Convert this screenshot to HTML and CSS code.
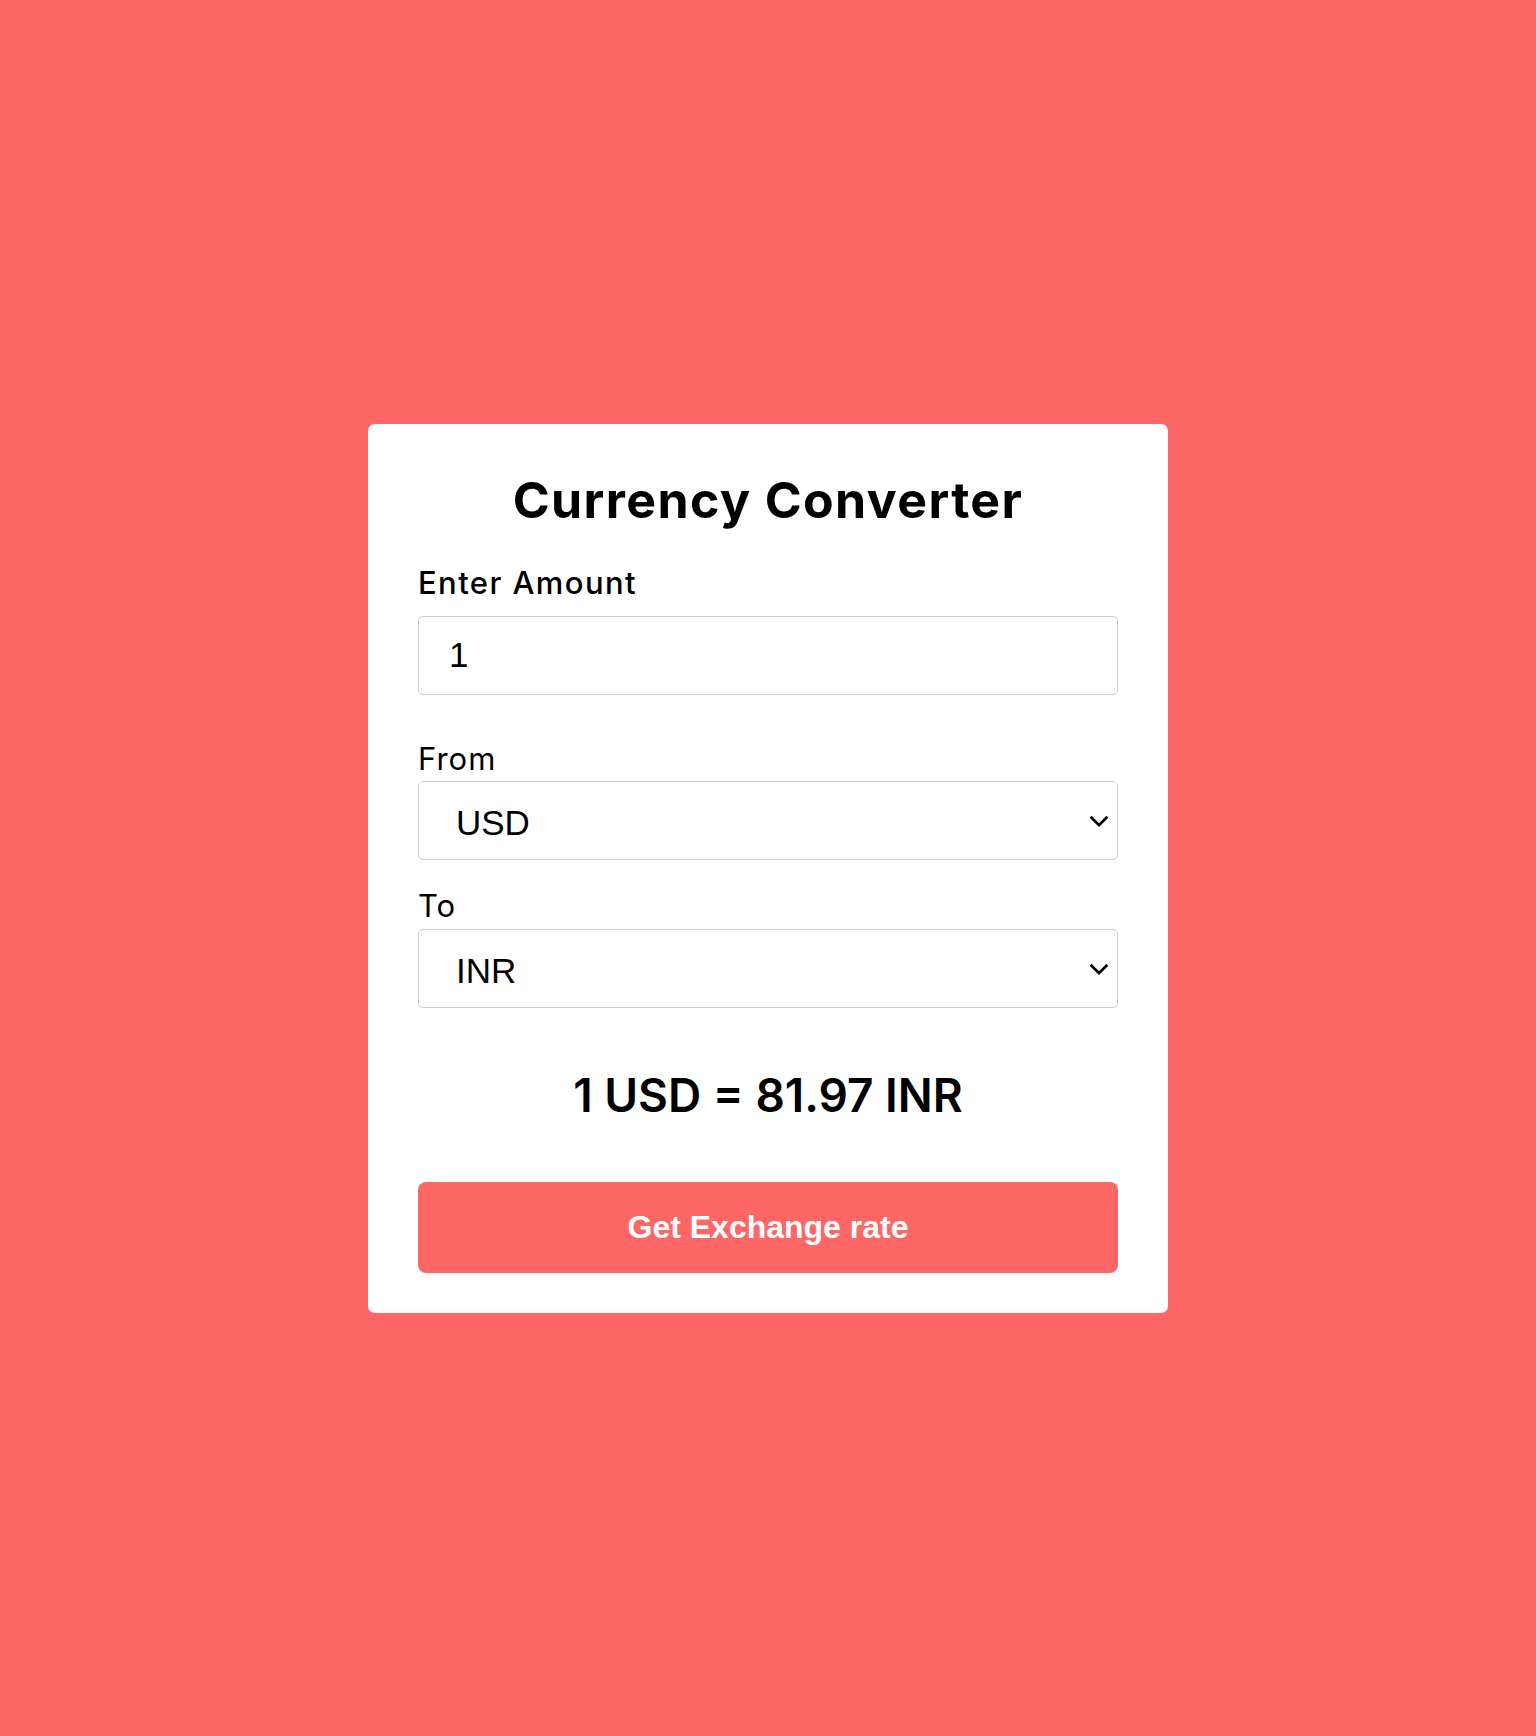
FILE: index.html
```html
<!DOCTYPE html>
<html lang="en">
<head>
<meta charset="utf-8">
<title>Currency Converter</title>
<link rel="stylesheet" href="styles.css">
</head>
<body>
<main class="page">
  <div class="card">
    <h1 class="title">Currency Converter</h1>
    <form class="form" onsubmit="return false;">
      <label class="label label-amount" for="amount">Enter Amount</label>
      <input class="field" id="amount" type="text" value="1">
      <label class="label label-from" for="from">From</label>
      <div class="select-wrap sw-from">
        <select class="field select" id="from">
          <option>USD</option>
          <option>INR</option>
          <option>EUR</option>
        </select>
        <svg class="chevron" width="20" height="13" viewBox="0 0 20 13" aria-hidden="true"><path d="M1.6 1.8 L10 10.2 L18.4 1.8" fill="none" stroke="#000" stroke-width="2.7"/></svg>
      </div>
      <label class="label label-to" for="to">To</label>
      <div class="select-wrap sw-to">
        <select class="field select" id="to">
          <option>INR</option>
          <option>USD</option>
          <option>EUR</option>
        </select>
        <svg class="chevron" width="20" height="13" viewBox="0 0 20 13" aria-hidden="true"><path d="M1.6 1.8 L10 10.2 L18.4 1.8" fill="none" stroke="#000" stroke-width="2.7"/></svg>
      </div>
      <div class="result">1 USD = 81.97 INR</div>
      <button class="btn" type="button">Get Exchange rate</button>
    </form>
  </div>
</main>
</body>
</html>
```
FILE: styles.css
```css
* { box-sizing: border-box; }
html, body { margin: 0; padding: 0; }
body {
  background: #ff6666;
  font-family: Inter, "Noto Sans", sans-serif;
  color: #000;
}
.page {
  min-height: 1736px;
  display: flex;
  align-items: center;
  justify-content: center;
}
.card {
  width: 800px;
  background: #fff;
  border-radius: 7px;
  padding: 51px 50px 40px;
}
.title {
  margin: 0;
  font-size: 50px;
  line-height: 50px;
  font-weight: 700;
  text-align: center;
  letter-spacing: 1.4px;
}
.form {
  display: flex;
  flex-direction: column;
}
.label {
  display: block;
  font-size: 31px;
  line-height: 31px;
  font-weight: 400;
  letter-spacing: 1px;
}
.label-amount { margin-top: 42px; font-weight: 500; letter-spacing: 1.4px; }
.label-from { margin-top: 48px; }
.label-to { margin-top: 30px; }
.field {
  width: 700px;
  height: 79px;
  border: 1px solid #cfcfcf;
  border-radius: 5px;
  background: #fff;
  font-family: "Liberation Sans", Arial, sans-serif;
  font-size: 35px;
  color: #000;
  padding: 0 30px;
  outline: none;
}
#amount { margin-top: 18px; }
.select-wrap { position: relative; margin-top: 7px; }
.sw-to { margin-top: 8px; }
.select {
  display: block;
  -webkit-appearance: none;
  appearance: none;
  padding-top: 4px;
  padding-left: 37px;
  padding-right: 40px;
}
.chevron {
  position: absolute;
  right: 9px;
  top: 34px;
  pointer-events: none;
}
.result {
  margin-top: 64px;
  font-size: 46px;
  line-height: 46px;
  font-weight: 600;
  text-align: center;
}
.btn {
  margin-top: 64px;
  height: 91px;
  width: 700px;
  border: none;
  border-radius: 8px;
  background: #ff6666;
  color: #fff;
  font-family: "Liberation Sans", Arial, sans-serif;
  font-weight: 700;
  font-size: 32px;
  cursor: pointer;
}
```
